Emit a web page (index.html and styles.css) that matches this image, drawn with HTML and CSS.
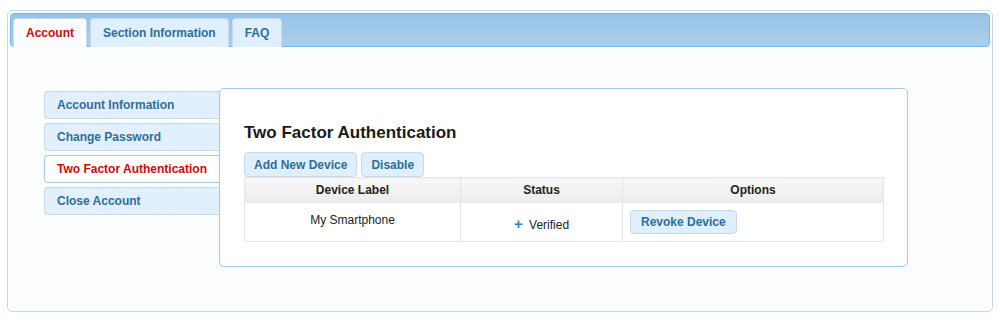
FILE: index.html
```html
<!DOCTYPE html>
<html>
<head>
<meta charset="utf-8">
<link rel="stylesheet" href="styles.css">
</head>
<body>
<div class="tabs">
  <ul class="tab-nav">
    <li class="tab active">Account</li>
    <li class="tab">Section Information</li>
    <li class="tab">FAQ</li>
  </ul>
  <div class="tab-body">
    <ul class="side-menu">
      <li class="side-item">Account Information</li>
      <li class="side-item">Change Password</li>
      <li class="side-item active">Two Factor Authentication</li>
      <li class="side-item">Close Account</li>
    </ul>
    <div class="panel">
      <h2 class="panel-title">Two Factor Authentication</h2>
      <div class="actions">
        <button class="btn">Add New Device</button>
        <button class="btn">Disable</button>
      </div>
      <table class="devices">
        <thead>
          <tr>
            <th class="col-label">Device Label</th>
            <th class="col-status">Status</th>
            <th class="col-options">Options</th>
          </tr>
        </thead>
        <tbody>
          <tr>
            <td class="cell-label">My Smartphone</td>
            <td class="cell-status"><span class="plus">+</span> Verified</td>
            <td class="cell-options"><button class="btn btn-row">Revoke Device</button></td>
          </tr>
        </tbody>
      </table>
    </div>
  </div>
</div>
</body>
</html>
```
FILE: styles.css
```css
* { box-sizing: border-box; }
html, body { margin: 0; padding: 0; background: #ffffff; }
body {
  font-family: "Liberation Sans", Arial, sans-serif;
  font-size: 12px;
  color: #222222;
}
.tabs {
  margin: 10px 0 0 7px;
  width: 986px;
  height: 302px;
  border: 1px solid #c5dbec;
  border-radius: 5px;
  background: #fcfdfd;
  padding: 2px;
}
.tab-nav {
  list-style: none;
  margin: 0;
  padding: 4px 3px 0 2px;
  height: 34px;
  display: flex;
  gap: 3px;
  border: 1px solid #79b7e7;
  border-radius: 4px;
  background: linear-gradient(to bottom, #98c3e5, #abcfea);
}
.tab {
  height: 29px;
  padding: 0 12px;
  display: flex;
  align-items: center;
  border: 1px solid #c5dbec;
  border-bottom: 0;
  border-radius: 4px 4px 0 0;
  background: #dfeffc;
  color: #2e6e9e;
  font-weight: bold;
  font-size: 12px;
}
.tab.tab-narrow { padding: 0 11px; }
.tab.active {
  background: #fbfcfd;
  color: #cd0a0a;
  border-color: #c5dbec;
}
.tab-body {
  display: flex;
  align-items: flex-start;
  padding: 41px 0 0 34px;
}
.side-menu {
  list-style: none;
  margin: 3px 0 0 0;
  padding: 0;
  width: 176px;
  display: flex;
  flex-direction: column;
  gap: 4px;
}
.side-item {
  height: 28px;
  padding-left: 12px;
  display: flex;
  align-items: center;
  border: 1px solid #c5dbec;
  border-right: 0;
  border-radius: 4px 0 0 4px;
  background: repeating-linear-gradient(135deg, #dfeffc 0 3px, #e4f1fc 3px 5px);
  color: #2e6e9e;
  font-weight: bold;
  font-size: 12px;
}
.side-item.active {
  background: #fdfefe;
  color: #cd0a0a;
  border-color: #a6c9e2;
}
.panel {
  position: relative;
  z-index: 1;
  margin-left: -1px;
  width: 689px;
  height: 179px;
  border: 1px solid #a6c9e2;
  border-radius: 5px;
  background: #ffffff;
  padding: 34px 23px 0 24px;
}
.panel-title {
  margin: 0;
  font-size: 17px;
  font-weight: bold;
  color: #1a1a1a;
  line-height: 20px;
}
.actions {
  display: flex;
  gap: 4px;
  margin-top: 9px;
}
.btn {
  font-family: "Liberation Sans", Arial, sans-serif;
  font-size: 12px;
  font-weight: bold;
  color: #2e6e9e;
  background: #dfeffc;
  border: 1px solid #c5dbec;
  border-radius: 4px;
  height: 25px;
  padding: 0 9px;
  margin: 0;
  cursor: pointer;
}
.devices {
  width: 640px;
  border-collapse: collapse;
  border: 1px solid #e4e4e4;
}
.devices th {
  height: 25px;
  padding: 0;
  background: linear-gradient(to bottom, #f8f8f8, #ebebeb);
  font-weight: bold;
  color: #222222;
  text-align: center;
  border-left: 1px solid #e4e4e4;
  font-size: 12px;
}
.devices td {
  height: 39px;
  padding: 0;
  text-align: center;
  color: #222222;
  border-left: 1px solid #e4e4e4;
  background: #ffffff;
  font-size: 12px;
}
.col-label { width: 216px; }
.col-status { width: 162px; }
.cell-label { padding-bottom: 3px !important; }
.cell-status { padding-top: 4px !important; }
.plus {
  color: #2e83c8;
  font-weight: bold;
  font-size: 15px;
  margin-right: 3px;
}
.devices td.cell-options {
  text-align: left;
  padding-left: 7px;
}
.btn-row {
  height: 24px;
  padding: 0 10px;
}
```
